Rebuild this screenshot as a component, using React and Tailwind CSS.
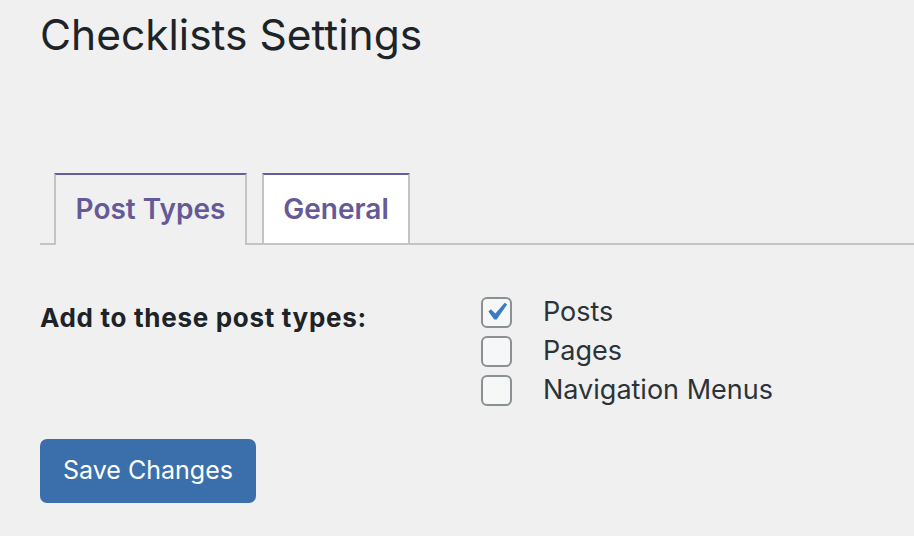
import React from "react";

const font = { fontFamily: "Inter, 'Noto Sans', sans-serif" };

function Checkbox({ checked }) {
  return (
    <span className="flex h-[31px] w-[31px] shrink-0 items-center justify-center rounded-[6px] border-2 border-[#8c8f94] bg-[#f6f7f7]">
      {checked && (
        <svg viewBox="0 0 20 20" className="-ml-[2px] -mt-[1px] h-[36px] w-[36px] shrink-0" aria-hidden="true">
          <path d="M14.83 4.89l1.34.94-5.81 8.38H9.02L5.78 9.67l1.34-1.25 2.57 2.4z" fill="#3b7cc0" />
        </svg>
      )}
    </span>
  );
}

export default function App() {
  const types = [
    { label: "Posts", checked: true },
    { label: "Pages", checked: false },
    { label: "Navigation Menus", checked: false },
  ];

  return (
    <div className="h-[536px] w-[914px] overflow-hidden bg-[#f0f0f1] pl-[40px]" style={font}>
      <h1 className="pt-[10px] text-[42.5px] leading-[50px] font-normal text-[#1d2327]">
        Checklists Settings
      </h1>

      {/* tabs */}
      <div className="mt-[113px] flex items-end border-b-2 border-[#c3c4c7]">
        <div className="-mb-[2px] ml-[14px] flex h-[72px] w-[193px] items-center justify-center border-2 border-b-0 border-[#c3c4c7] border-t-[#6a5c9a] bg-[#f0f0f1] pb-[2px] text-[28px] font-semibold text-[#655997]">
          Post Types
        </div>
        <div className="ml-[15px] flex h-[70px] w-[148px] items-center justify-center border-2 border-b-0 border-[#c3c4c7] border-t-[#6a5c9a] bg-white text-[28px] font-semibold text-[#655997]">
          General
        </div>
      </div>

      {/* form */}
      <div className="mt-[52px] flex">
        <div className="w-[441px] pt-[3px] text-[26px] leading-[36px] font-bold tracking-[0.7px] text-[#1d2327]">
          Add to these post types:
        </div>
        <div className="flex flex-col gap-[9px]">
          {types.map((t) => (
            <label key={t.label} className="flex h-[30px] items-center gap-[31px]">
              <Checkbox checked={t.checked} />
              <span className="text-[27px] leading-[30px] text-[#2c3338]">{t.label}</span>
            </label>
          ))}
        </div>
      </div>

      <button
        type="button"
        className="mt-[34px] flex h-[64px] w-[216px] items-center justify-center rounded-[7px] bg-[#3a6fab] text-[25px] text-white"
      >
        Save Changes
      </button>
    </div>
  );
}
